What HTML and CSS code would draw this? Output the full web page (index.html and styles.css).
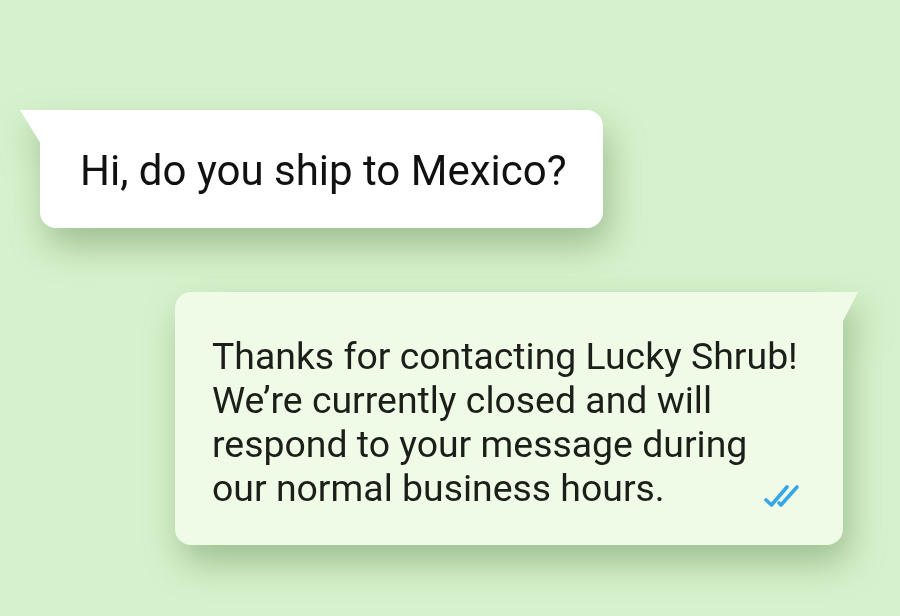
FILE: index.html
```html
<!DOCTYPE html>
<html>
<head>
<meta charset="utf-8">
<link rel="stylesheet" href="styles.css">
</head>
<body>
<main class="chat">
  <div class="bubble incoming">
    <p class="msg">Hi, do you ship to Mexico?</p>
  </div>
  <div class="bubble outgoing">
    <p class="msg">Thanks for contacting Lucky Shrub!<br>We’re currently closed and will<br>respond to your message during<br>our normal business hours.</p>
    <svg class="ticks" viewBox="0 0 36 24" width="36" height="24" aria-hidden="true">
      <path d="M2 16 L7.5 21 L23 3" fill="none" stroke="#35a6e6" stroke-width="3.6" stroke-linecap="round" stroke-linejoin="round"/>
      <path d="M15 19 L17 21 L33 3" fill="none" stroke="#35a6e6" stroke-width="3.6" stroke-linecap="round" stroke-linejoin="round"/>
    </svg>
  </div>
</main>
</body>
</html>
```

FILE: styles.css
```css
html, body {
  margin: 0;
  padding: 0;
}
body {
  background: #d6f2cd;
  width: 900px;
  height: 616px;
  overflow: hidden;
  font-family: Roboto, "Liberation Sans", sans-serif;
  color: #141414;
}
.chat {
  display: flex;
  flex-direction: column;
  align-items: flex-start;
  padding-top: 110px;
  gap: 64px;
}
.bubble {
  position: relative;
  box-sizing: border-box;
  filter: drop-shadow(6px 18px 18px rgba(60, 100, 40, 0.36));
}
.bubble::before {
  content: "";
  position: absolute;
  top: 0;
}
.incoming {
  margin-left: 40px;
  width: 563px;
  height: 118px;
  background: #ffffff;
  border-radius: 0 16px 16px 16px;
  padding: 37px 0 0 40px;
}
.incoming::before {
  left: -20px;
  width: 21px;
  height: 34px;
  background: #ffffff;
  clip-path: polygon(0 0, 100% 0, 100% 100%);
}
.incoming .msg {
  font-size: 42px;
  line-height: 48px;
  color: #111111;
}
.outgoing {
  margin-left: 175px;
  width: 668px;
  height: 253px;
  background: #effbe6;
  border-radius: 16px 0 16px 16px;
  padding: 42px 0 0 37px;
}
.outgoing::before {
  right: -15px;
  width: 16px;
  height: 31px;
  background: #effbe6;
  clip-path: polygon(0 0, 100% 0, 0 100%);
}
.outgoing .msg {
  font-size: 37.4px;
  line-height: 44px;
  color: #1c1e1a;
}
.msg {
  margin: 0;
  white-space: nowrap;
}
.ticks {
  position: absolute;
  right: 43px;
  bottom: 37px;
}
```
